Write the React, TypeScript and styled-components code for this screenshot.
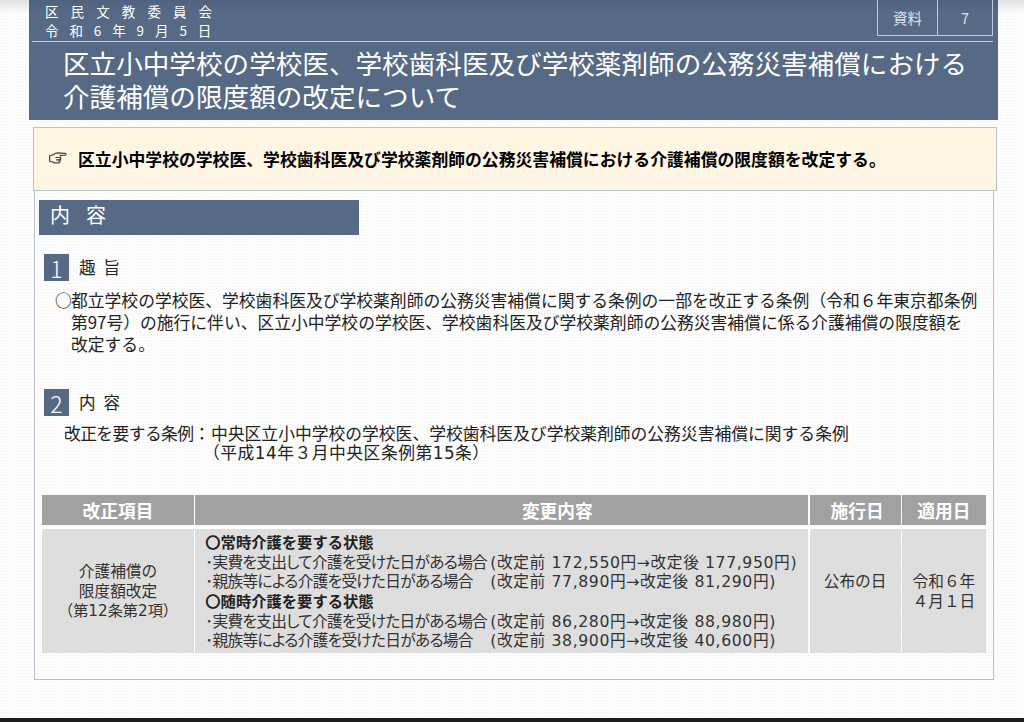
import React from "react";
import styled, { createGlobalStyle } from "styled-components";

const Global = createGlobalStyle`
  html, body { margin: 0; padding: 0; background: #fff; }
  body { width: 1024px; height: 722px; overflow: hidden; font-family: "Noto Sans CJK JP", "Noto Sans", sans-serif; }
`;

const Page = styled.div`
  width: 1024px;
  height: 722px;
  display: flex;
  flex-direction: column;
  background-color: #fdfdfd;
  background-image: linear-gradient(#e2e2e2, rgba(255, 255, 255, 0) 13px), radial-gradient(#f1f1f1 0.5px, transparent 0.6px);
  background-size: 100% 100%, 3px 3px;
  overflow: hidden;
`;

const Slide = styled.div`
  flex: 1;
  min-height: 0;
  padding: 0 26px 0 29px;
  display: flex;
  flex-direction: column;
`;

const Banner = styled.header`
  height: 120px;
  flex: none;
  background: linear-gradient(#4f6280, #566985 14px);
  display: flex;
  flex-direction: column;
  padding: 0 5px 0 3px;
  color: #fff;
`;

const BannerTop = styled.div`
  height: 41px;
  flex: none;
  display: flex;
  justify-content: space-between;
  border-bottom: 1px solid #c3cad6;
  box-sizing: content-box;
`;

const Committee = styled.div`
  padding: 2px 0 0 13px;
  font-size: 13.5px;
  line-height: 18.5px;
  color: #fff;
`;

const CommitteeLine = styled.div<{ $gap: number }>`
  letter-spacing: ${(p) => p.$gap}px;
`;

const DocTag = styled.div`
  display: flex;
  height: 35px;
  border: 1px solid #c3cad6;
  border-top: none;
`;

const DocCell = styled.div<{ $w: number }>`
  width: ${(p) => p.$w}px;
  display: flex;
  align-items: center;
  justify-content: center;
  font-size: 14.5px;
  color: #dfe3ea;
  & + & { border-left: 1px solid #c3cad6; }
`;

const Title = styled.h1`
  margin: 0;
  padding: 4px 0 0 31px;
  font-size: 26.6px;
  line-height: 33px;
  font-weight: 400;
  color: #fff;
  white-space: nowrap;
`;

const Notice = styled.div`
  height: 64px;
  flex: none;
  box-sizing: border-box;
  margin: 7px 1px 0 4px;
  background: #fff6e3;
  border: 1px solid #bcc3cf;
  display: flex;
  align-items: center;
  padding: 0 0 2px 15px;
  gap: 11px;
  font-size: 16.84px;
  font-weight: 700;
  color: #000;
  white-space: nowrap;
`;

const Panel = styled.section`
  height: 490px;
  flex: none;
  box-sizing: border-box;
  margin: -1px 4px 0 5px;
  border: 1px solid #b4bdd2;
  border-top: none;
  display: flex;
  flex-direction: column;
  padding: 10px 7px 0 4px;
`;

const SectionBar = styled.h2`
  margin: 0;
  width: 320px;
  height: 35px;
  flex: none;
  background: #566985;
  color: #fff;
  font-size: 20px;
  font-weight: 400;
  line-height: 30px;
  letter-spacing: 16px;
  padding-left: 11px;
  box-sizing: border-box;
`;

const Heading = styled.div<{ $top: number }>`
  display: flex;
  align-items: center;
  gap: 10px;
  margin: ${(p) => p.$top}px 0 0 5px;
  font-size: 16.5px;
  letter-spacing: 8px;
  color: #222;
  height: 27px;
  flex: none;
`;

const HeadingText = styled.span`
  padding-bottom: 2px;
`;

const Num = styled.span`
  width: 25px;
  height: 27px;
  background: #566985;
  color: #fff;
  font-size: 23px;
  font-weight: 300;
  letter-spacing: 0;
  display: flex;
  align-items: center;
  justify-content: center;
`;

const Paragraph = styled.p`
  margin: 8px 0 0 16px;
  font-size: 16.8px;
  line-height: 22px;
  color: #222;
  display: flex;
  white-space: nowrap;
`;

const Bullet = styled.span`
  flex: none;
  width: 16px;
`;

const Amend = styled.div`
  margin: 7px 0 0 25px;
  font-size: 16.8px;
  line-height: 20px;
  color: #222;
  display: grid;
  grid-template-columns: 147px auto;
  justify-content: start;
  white-space: nowrap;
`;

const AmendLabel = styled.span`
  letter-spacing: -0.6px;
`;

const AmendNote = styled.span`
  margin-left: -8px;
  letter-spacing: 0.5px;
  font-family: "DejaVu Sans", "Noto Sans CJK JP", sans-serif;
`;

const Table = styled.div`
  margin: 32px 0 0 3px;
  width: 944px;
  display: grid;
  grid-template-columns: 152px 613px 91px 84px;
  column-gap: 1.3px;
  grid-template-rows: 30px 124px;
  row-gap: 4px;
`;

const HeadCell = styled.div<{ $shift?: number }>`
  background: #a1a1a1;
  color: #fff;
  font-size: 17.7px;
  font-weight: 700;
  display: flex;
  align-items: center;
  justify-content: center;
  padding-left: ${(p) => p.$shift ?? 0}px;
`;

const BodyCell = styled.div<{ $lift?: number }>`
  background: #dedede;
  color: #333;
  font-size: 15.7px;
  line-height: 20px;
  font-family: "Noto Sans CJK JP", sans-serif;
  display: flex;
  flex-direction: column;
  align-items: center;
  justify-content: center;
  text-align: center;
  padding-bottom: ${(p) => p.$lift ?? 0}px;
`;

const Article = styled.div`
  font-family: "DejaVu Sans", "Noto Sans CJK JP", sans-serif;
  font-size: 15.2px;
`;

const DetailCell = styled.div`
  background: #dedede;
  color: #333;
  font-size: 15.7px;
  line-height: 19.7px;
  padding: 3px 0 0 10px;
  white-space: nowrap;
`;

const DetailTitle = styled.div`
  height: 19.7px;
  font-size: 15.3px;
  font-weight: 700;
  color: #222;
`;

const DetailRow = styled.div`
  height: 19.7px;
  display: flex;
  align-items: baseline;
`;

const DetailLabel = styled.span`
  flex: none;
  width: 285px;
  font-feature-settings: "palt";
  letter-spacing: -0.7px;
`;

const DetailAmount = styled.span`
  font-family: "DejaVu Sans", "Noto Sans CJK JP", sans-serif;
  letter-spacing: 0.6px;
`;

const Footer = styled.div`
  height: 4px;
  flex: none;
  background: #1c1c1c;
`;

const HandIcon = () => (
  <svg width="18" height="12" viewBox="0 0 18 12" fill="none" stroke="#444" strokeWidth="1.2">
    <path d="M0.500 3.500l3 -.4 3-1.800 2-.5 7.500.6c1.300.2 1.300 1.700 0 1.800l-5.500.1" />
    <path d="M0.500 9.500l3 .3 1.500 1h5c1 0 1.200-1.100.5-1.500 1 0 1.200-1.200.5-1.600 .9 0 1.100-1.300.3-1.700 .7-.3.6-1.300.2-1.700" />
    <path d="M6.500 5.500h4.500M7 7.800h4" />
    <path d="M0.500 3.500v6" strokeWidth="1.500" />
  </svg>
);

const rows1 = [
  ["･実費を支出して介護を受けた日がある場合", "(改定前 172,550円→改定後 177,950円)"],
  ["･親族等による介護を受けた日がある場合", "(改定前 77,890円→改定後 81,290円)"],
];
const rows2 = [
  ["･実費を支出して介護を受けた日がある場合", "(改定前 86,280円→改定後 88,980円)"],
  ["･親族等による介護を受けた日がある場合", "(改定前 38,900円→改定後 40,600円)"],
];

const Rows = ({ rows }: { rows: string[][] }) => (
  <>
    {rows.map(([label, amount]) => (
      <DetailRow key={amount}>
        <DetailLabel>{label}</DetailLabel>
        <DetailAmount>{amount}</DetailAmount>
      </DetailRow>
    ))}
  </>
);

export default function App() {
  return (
    <Page>
      <Global />
      <Slide>
        <Banner>
          <BannerTop>
            <Committee>
              <CommitteeLine $gap={12.1}>区民文教委員会</CommitteeLine>
              <CommitteeLine $gap={10.9}>令和6年9月5日</CommitteeLine>
            </Committee>
            <DocTag>
              <DocCell $w={59}>資料</DocCell>
              <DocCell $w={54}>7</DocCell>
            </DocTag>
          </BannerTop>
          <Title>
            区立小中学校の学校医、学校歯科医及び学校薬剤師の公務災害補償における
            <br />
            介護補償の限度額の改定について
          </Title>
        </Banner>
        <Notice>
          <HandIcon />
          <span>区立小中学校の学校医、学校歯科医及び学校薬剤師の公務災害補償における介護補償の限度額を改定する。</span>
        </Notice>
        <Panel>
          <SectionBar>内容</SectionBar>
          <Heading $top={19}>
            <Num>1</Num>
            <HeadingText>趣旨</HeadingText>
          </Heading>
          <Paragraph>
            <Bullet>○</Bullet>
            <span>
              都立学校の学校医、学校歯科医及び学校薬剤師の公務災害補償に関する条例の一部を改正する条例（令和６年東京都条例
              <br />
              第97号）の施行に伴い、区立小中学校の学校医、学校歯科医及び学校薬剤師の公務災害補償に係る介護補償の限度額を
              <br />
              改定する。
            </span>
          </Paragraph>
          <Heading $top={34}>
            <Num>2</Num>
            <HeadingText>内容</HeadingText>
          </Heading>
          <Amend>
            <AmendLabel>改正を要する条例：</AmendLabel>
            <span>中央区立小中学校の学校医、学校歯科医及び学校薬剤師の公務災害補償に関する条例</span>
            <span />
            <AmendNote>（平成14年３月中央区条例第15条）</AmendNote>
          </Amend>
          <Table>
            <HeadCell>改正項目</HeadCell>
            <HeadCell $shift={111}>変更内容</HeadCell>
            <HeadCell $shift={4}>施行日</HeadCell>
            <HeadCell>適用日</HeadCell>
            <BodyCell>
              <div>介護補償の</div>
              <div>限度額改定</div>
              <Article>（第12条第2項）</Article>
            </BodyCell>
            <DetailCell>
              <DetailTitle>〇常時介護を要する状態</DetailTitle>
              <Rows rows={rows1} />
              <DetailTitle>〇随時介護を要する状態</DetailTitle>
              <Rows rows={rows2} />
            </DetailCell>
            <BodyCell $lift={20}>公布の日</BodyCell>
            <BodyCell>
              <div>令和６年</div>
              <div>４月１日</div>
            </BodyCell>
          </Table>
        </Panel>
      </Slide>
      <Footer />
    </Page>
  );
}
